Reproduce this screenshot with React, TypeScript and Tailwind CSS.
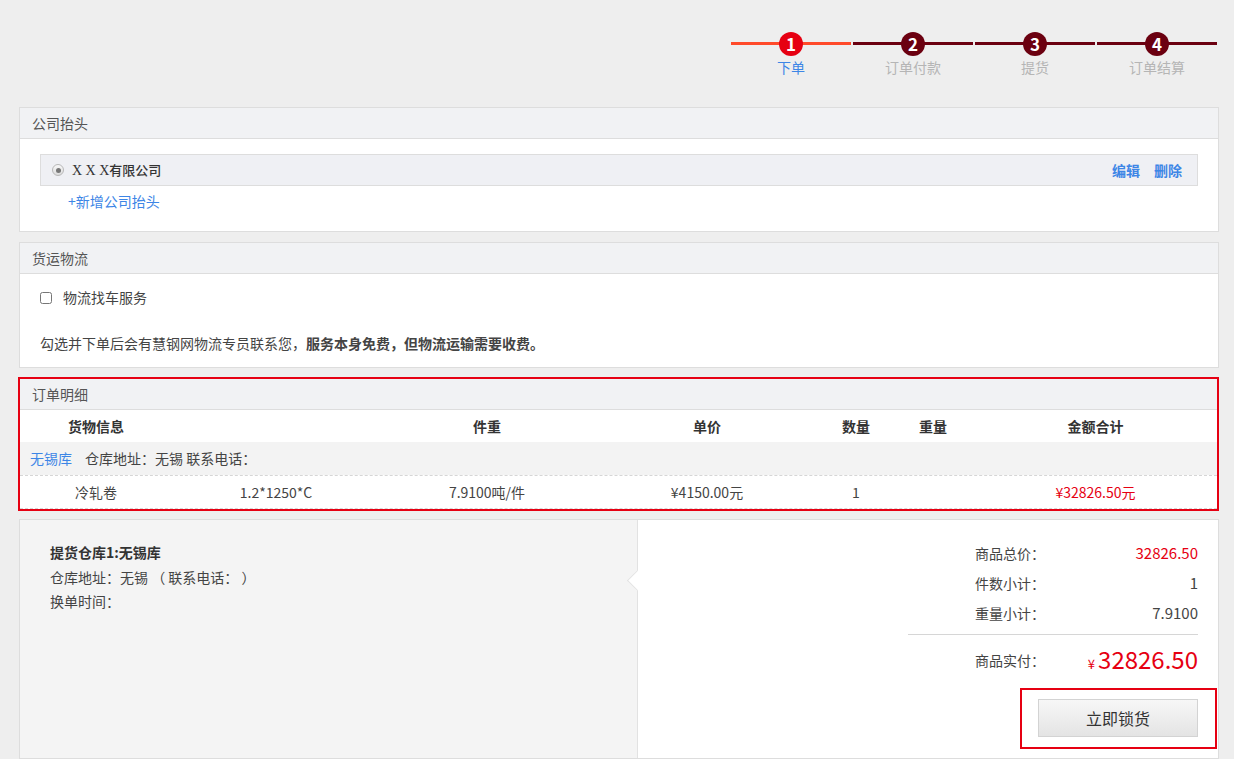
import { useState } from "react";

const steps = [
  { n: "1", label: "下单", active: true },
  { n: "2", label: "订单付款", active: false },
  { n: "3", label: "提货", active: false },
  { n: "4", label: "订单结算", active: false },
];

function Steps() {
  return (
    <div className="flex justify-end pr-[17px] pt-8">
      <div className="flex gap-[2px]">
        {steps.map((s) => (
          <div key={s.n} className="flex w-[120px] flex-col items-center">
            <div className="relative flex h-6 w-full items-center justify-center">
              <div
                className={
                  s.active
                    ? "absolute left-0 right-0 top-[10px] h-[3px] bg-[#ff4a2a]"
                    : "absolute left-0 right-0 top-[10px] h-[3px] bg-[#6b0010]"
                }
              />
              <span
                className={
                  s.active
                    ? "relative flex h-6 w-6 items-center justify-center rounded-full bg-[#e60012] text-[17px] font-bold text-white"
                    : "relative flex h-6 w-6 items-center justify-center rounded-full bg-[#6b0010] text-[17px] font-bold text-white"
                }
              >
                {s.n}
              </span>
            </div>
            <span
              className={
                s.active
                  ? "mt-[1px] text-[14px] text-[#3d86e6]"
                  : "mt-[1px] text-[14px] text-[#b5b5b5]"
              }
            >
              {s.label}
            </span>
          </div>
        ))}
      </div>
    </div>
  );
}

function PanelHead({ title }: { title: string }) {
  return (
    <div className="flex h-[31px] items-center border-b border-[#dddddd] bg-[#f1f2f4] pl-[12px] text-[14px] text-[#555]">
      {title}
    </div>
  );
}

const cols = "grid grid-cols-[152px_208px_214px_226px_72px_82px_1fr] items-center text-center";

export default function App() {
  const [checked, setChecked] = useState(false);

  return (
    <div
      className="min-h-[759px] bg-[#eeeeee] text-[14px] text-[#333]"
      style={{ fontFamily: '"Noto Sans CJK SC", "Noto Sans", sans-serif' }}
    >
      <Steps />

      <div className="ml-[19px] mt-[29px] flex w-[1200px] flex-col">
        {/* 公司抬头 */}
        <div className="border border-[#dddddd] bg-white">
          <PanelHead title="公司抬头" />
          <div className="px-5 pb-[19px] pt-[15px]">
            <div className="flex h-8 items-center border border-[#dddddd] bg-[#eff0f4] pl-[11px] pr-[15px]">
              <span className="flex h-3 w-3 items-center justify-center rounded-full border border-[#b8b8b8] bg-gradient-to-b from-[#f8f8f8] to-[#dcdcdc]">
                <span className="h-[5px] w-[5px] rounded-full bg-[#777]" />
              </span>
              <span className="ml-[8px] text-[13px] font-medium text-[#333]">
                <span style={{ fontFamily: '"Liberation Serif", serif' }} className="text-[14px]">
                  X X X
                </span>
                有限公司
              </span>
              <span className="ml-auto flex gap-[14px] text-[14px] font-bold text-[#3d86e6]">
                <span>编辑</span>
                <span>删除</span>
              </span>
            </div>
            <div className="mt-[5px] pl-[28px] text-[14px] text-[#3d86e6]">+新增公司抬头</div>
          </div>
        </div>

        {/* 货运物流 */}
        <div className="mt-[10px] border border-[#dddddd] bg-white">
          <PanelHead title="货运物流" />
          <div className="px-5 pb-[13px] pt-[13px]">
            <label className="flex items-center gap-[11px]">
              <input
                type="checkbox"
                checked={checked}
                onChange={() => setChecked(!checked)}
                className="h-[12px] w-[12px] accent-[#888]"
              />
              <span className="text-[14px] text-[#444]">物流找车服务</span>
            </label>
            <p className="mt-[25px] text-[14px] text-[#444]">
              勾选并下单后会有慧钢网物流专员联系您，
              <span className="font-bold">服务本身免费，但物流运输需要收费。</span>
            </p>
          </div>
        </div>

        {/* 订单明细 */}
        <div className="-ml-px mt-[9px] border-2 border-[#e60012] bg-white">
          <PanelHead title="订单明细" />
          <div className={`${cols} h-[32px] text-[14px] font-bold text-[#333]`}>
            <span>货物信息</span>
            <span />
            <span>件重</span>
            <span>单价</span>
            <span>数量</span>
            <span>重量</span>
            <span>金额合计</span>
          </div>
          <div className="flex h-[33px] items-center gap-[13px] bg-[#f3f3f3] pl-[10px] text-[14px]">
            <span className="text-[#3d86e6]">无锡库</span>
            <span className="text-[#444]">仓库地址：无锡 联系电话：</span>
          </div>
          <div className={`${cols} h-[34px] border-y border-dashed border-[#d6d6d6] text-[14px] text-[#444]`}>
            <span>冷轧卷</span>
            <span>1.2*1250*C</span>
            <span>7.9100吨/件</span>
            <span>¥4150.00元</span>
            <span>1</span>
            <span />
            <span className="text-[#e60012]">¥32826.50元</span>
          </div>
        </div>

        {/* 提货 / 结算 */}
        <div className="mt-[8px] flex h-[240px] border border-[#dddddd] bg-white">
          <div className="w-[617px] bg-[#f4f4f4] pl-[30px] pt-[20px] text-[14px] leading-[24.5px] text-[#444]">
            <div className="font-bold text-[#333]">提货仓库1:无锡库</div>
            <div>仓库地址：无锡 （ 联系电话： ）</div>
            <div>换单时间：</div>
          </div>
          <div className="relative flex flex-1 flex-col items-end border-l border-[#e2e2e2] pr-[1px] pt-[18px]">
            <span className="absolute left-[-8px] top-[53px] h-[15px] w-[15px] rotate-45 border-b border-l border-[#e2e2e2] bg-white" />
            <div className="mr-[19px] flex w-[290px] flex-col text-[14px] text-[#444]">
              <div className="flex h-[30px] items-center justify-end">
                <span>商品总价：</span>
                <span className="w-[153px] text-right text-[15px] text-[#e60012]">32826.50</span>
              </div>
              <div className="flex h-[30px] items-center justify-end">
                <span>件数小计：</span>
                <span className="w-[153px] text-right text-[15px]">1</span>
              </div>
              <div className="flex h-[30px] items-center justify-end">
                <span>重量小计：</span>
                <span className="w-[153px] text-right text-[15px]">7.9100</span>
              </div>
              <div className="mt-[6px] border-t border-[#d6d6d6]" />
              <div className="flex h-[50px] items-center justify-end">
                <span>商品实付：</span>
                <span className="flex w-[153px] items-baseline justify-end text-[#e60012]">
                  <span className="mr-[3px] text-[13px]">¥</span>
                  <span className="text-[24px] leading-none">32826.50</span>
                </span>
              </div>
            </div>
            <div className="mt-[3px] border-2 border-[#e60012] pb-[10px] pl-[16px] pr-[17px] pt-[9px]">
              <button className="flex h-[38px] w-[160px] items-center justify-center border border-[#d3d3d3] bg-gradient-to-b from-[#f7f7f7] to-[#e4e4e4] text-[16px] text-[#333]">
                立即锁货
              </button>
            </div>
          </div>
        </div>
      </div>
    </div>
  );
}
